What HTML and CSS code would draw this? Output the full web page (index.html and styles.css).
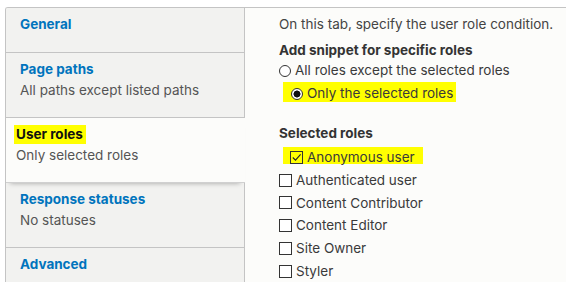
FILE: index.html
```html
<!DOCTYPE html>
<html lang="en">
<head>
<meta charset="utf-8">
<title>Snippet conditions</title>
<link rel="stylesheet" href="styles.css">
</head>
<body>
<div class="vtabs">
  <ul class="menu">
    <li class="tab tab-first">
      <a class="tab-title" href="#">General</a>
      <span class="tab-summary"></span>
    </li>
    <li class="tab">
      <a class="tab-title" href="#">Page paths</a>
      <span class="tab-summary">All paths except listed paths</span>
    </li>
    <li class="tab is-selected">
      <a class="tab-title" href="#"><span class="mark-title">User roles</span></a>
      <span class="tab-summary">Only selected roles</span>
    </li>
    <li class="tab">
      <a class="tab-title" href="#">Response statuses</a>
      <span class="tab-summary">No statuses</span>
    </li>
    <li class="tab">
      <a class="tab-title" href="#">Advanced</a>
      <span class="tab-summary"></span>
    </li>
  </ul>
  <div class="pane">
    <p class="desc">On this tab, specify the user role condition.</p>
    <div class="group">
      <div class="group-label">Add snippet for specific roles</div>
      <div class="opts opts-radio">
        <label class="opt"><span class="radio"></span><span>All roles except the selected roles</span></label>
        <label class="opt"><span class="mark mark-radio"><span class="radio is-checked"></span><span>Only the selected roles</span></span></label>
      </div>
    </div>
    <div class="group group-roles">
      <div class="group-label">Selected roles</div>
      <div class="opts opts-check">
        <label class="opt"><span class="mark mark-check"><span class="check is-checked"><svg viewBox="0 0 11 11" width="11" height="11"><polyline points="1.8,5.5 4.5,8.2 9.6,2.4" fill="none" stroke="#222" stroke-width="1.1"/></svg></span><span>Anonymous user</span></span></label>
        <label class="opt"><span class="check"></span><span>Authenticated user</span></label>
        <label class="opt"><span class="check"></span><span>Content Contributor</span></label>
        <label class="opt"><span class="check"></span><span>Content Editor</span></label>
        <label class="opt"><span class="check"></span><span>Site Owner</span></label>
        <label class="opt"><span class="check"></span><span>Styler</span></label>
      </div>
    </div>
  </div>
</div>
</body>
</html>
```
FILE: styles.css
```css
html, body {
  margin: 0;
  padding: 0;
  background: #ffffff;
  height: 100%;
  overflow: hidden;
}
body {
  font-family: "Inter", "Noto Sans", sans-serif;
  font-size: 13.5px;
  color: #444;
}
.vtabs {
  display: flex;
  margin: 7px 0 0 5px;
  border-top: 1px solid #c4c4c4;
  border-left: 1px solid #c4c4c4;
  border-top-left-radius: 3px;
  background: #fcfcfa;
  height: calc(100vh - 8px);
  overflow: hidden;
}
.menu {
  list-style: none;
  margin: 0;
  padding: 0;
  width: 238px;
  flex: none;
  background: #f2f2f0;
  border-right: 1px solid #c4c4c4;
}
.tab {
  display: flex;
  flex-direction: column;
  padding: 6px 0 16px 14px;
  line-height: 21px;
  border-bottom: 1px solid #c4c4c4;
  background: #f2f2f0;
}
.tab-first {
  padding-bottom: 17px;
}
.tab-summary:empty {
  display: none;
}
.tab-title {
  color: #0074bd;
  font-weight: 700;
  text-decoration: none;
}
.tab-summary {
  color: #555;
}
.tab.is-selected {
  position: relative;
  z-index: 1;
  margin-right: -1px;
  margin-left: -1px;
  padding-left: 11px;
  background: #fcfcfa;
  border-bottom-color: #d0d0d0;
  box-shadow: 0 5px 5px -5px rgba(0, 0, 0, 0.35);
}
.is-selected .tab-title {
  color: #111;
}
.mark-title {
  display: inline-block;
  margin-left: -2px;
  padding: 0 3px 0 2px;
  line-height: 19px;
  background: #ffff00;
}
.pane {
  flex: 1;
  padding: 6px 0 0 34px;
}
.desc {
  margin: 0;
  line-height: 21px;
}
.group {
  margin-top: 6px;
}
.group-label {
  font-weight: 700;
  line-height: 18px;
  color: #333;
}
.group-roles {
  margin-top: 19px;
}
.opts-radio .opt {
  line-height: 23px;
}
.opts-check {
  margin-top: 4px;
}
.opts-check .opt {
  line-height: 22.8px;
}
.opt {
  display: flex;
  align-items: center;
  color: #3a3a3a;
}
.opt > span:last-child,
.mark > span:last-child {
  margin-left: 4px;
}
.mark {
  display: inline-flex;
  align-items: center;
  margin-left: -8px;
  padding-left: 8px;
  background-image: linear-gradient(#ffff00, #ffff00);
  background-repeat: no-repeat;
}
.mark-radio {
  padding-right: 3px;
  background-size: 100% 20px;
  background-position: 0 0;
}
.mark-check {
  margin-left: -7px;
  padding-left: 7px;
  padding-right: 8px;
  background-size: 100% 17px;
  background-position: 0 1px;
}
.radio {
  display: inline-block;
  flex: none;
  box-sizing: border-box;
  width: 12px;
  height: 12px;
  border: 1px solid #333;
  border-radius: 50%;
  background: #fff;
}
.radio.is-checked {
  background: radial-gradient(circle, #111 0 3.2px, #fff 3.8px);
}
.check {
  display: inline-flex;
  align-items: center;
  justify-content: center;
  flex: none;
  box-sizing: border-box;
  width: 13px;
  height: 13px;
  border: 1px solid #333;
  background: #fff;
}
.check.is-checked {
  background: transparent;
}
.check svg {
  display: block;
}
```
